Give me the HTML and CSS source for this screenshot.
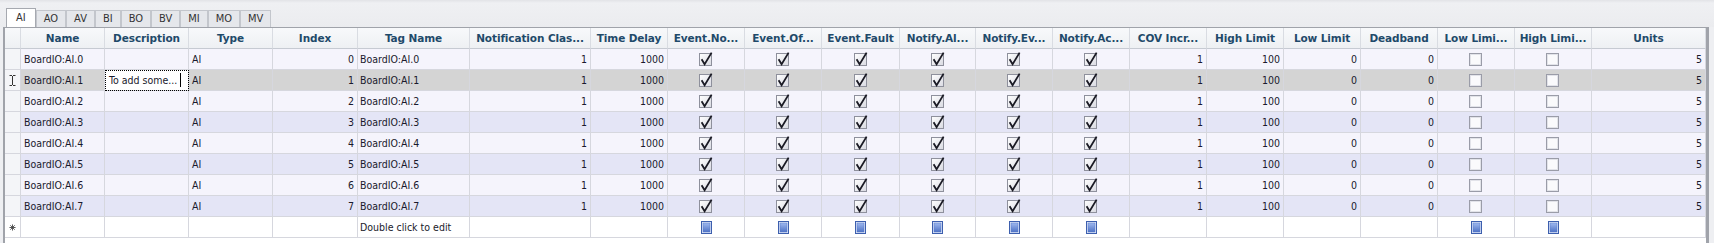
FILE: index.html
```html
<!DOCTYPE html>
<html>
<head>
<meta charset="utf-8">
<link rel="stylesheet" href="styles.css">
</head>
<body>
<div class="top">
  <div class="tab active">AI</div><div class="tab">AO</div><div class="tab">AV</div><div class="tab">BI</div><div class="tab">BO</div><div class="tab">BV</div><div class="tab">MI</div><div class="tab">MO</div><div class="tab">MV</div>
</div>
<div class="grid">
  <div class="row hdr">
    <div class="c ind"></div><div class="c">Name</div><div class="c">Description</div><div class="c">Type</div><div class="c">Index</div><div class="c">Tag Name</div><div class="c">Notification Clas...</div><div class="c">Time Delay</div><div class="c">Event.No...</div><div class="c">Event.Of...</div><div class="c">Event.Fault</div><div class="c">Notify.Al...</div><div class="c">Notify.Ev...</div><div class="c">Notify.Ac...</div><div class="c">COV Incr...</div><div class="c">High Limit</div><div class="c">Low Limit</div><div class="c">Deadband</div><div class="c">Low Limi...</div><div class="c">High Limi...</div><div class="c">Units</div>
  </div>

  <div class="row even">
    <div class="c ind"></div><div class="c">BoardIO:AI.0</div><div class="c"></div><div class="c">AI</div><div class="c r">0</div><div class="c tg">BoardIO:AI.0</div><div class="c r">1</div><div class="c r">1000</div>
    <div class="c ctr"><svg class="cb"><use href="#chk"/></svg></div><div class="c ctr"><svg class="cb"><use href="#chk"/></svg></div><div class="c ctr"><svg class="cb"><use href="#chk"/></svg></div><div class="c ctr"><svg class="cb"><use href="#chk"/></svg></div><div class="c ctr"><svg class="cb"><use href="#chk"/></svg></div><div class="c ctr"><svg class="cb"><use href="#chk"/></svg></div>
    <div class="c r">1</div><div class="c r">100</div><div class="c r">0</div><div class="c r">0</div><div class="c ctr"><svg class="cb"><use href="#unc"/></svg></div><div class="c ctr"><svg class="cb"><use href="#unc"/></svg></div><div class="c r">5</div>
  </div>

  <div class="row sel">
    <div class="c ind ctr"><svg class="ibeam" viewBox="0 0 7 11"><path d="M0.5 0.5h2.5M4 0.5h2.5M3.5 1v9M0.5 10.5h2.5M4 10.5h2.5" fill="none" stroke="#333" stroke-width="1"/></svg></div><div class="c">BoardIO:AI.1</div><div class="c edit">To add some...<span class="caret"></span></div><div class="c">AI</div><div class="c r">1</div><div class="c tg">BoardIO:AI.1</div><div class="c r">1</div><div class="c r">1000</div>
    <div class="c ctr"><svg class="cb"><use href="#chk"/></svg></div><div class="c ctr"><svg class="cb"><use href="#chk"/></svg></div><div class="c ctr"><svg class="cb"><use href="#chk"/></svg></div><div class="c ctr"><svg class="cb"><use href="#chk"/></svg></div><div class="c ctr"><svg class="cb"><use href="#chk"/></svg></div><div class="c ctr"><svg class="cb"><use href="#chk"/></svg></div>
    <div class="c r">1</div><div class="c r">100</div><div class="c r">0</div><div class="c r">0</div><div class="c ctr"><svg class="cb"><use href="#unc"/></svg></div><div class="c ctr"><svg class="cb"><use href="#unc"/></svg></div><div class="c r">5</div>
  </div>

  <div class="row even">
    <div class="c ind"></div><div class="c">BoardIO:AI.2</div><div class="c"></div><div class="c">AI</div><div class="c r">2</div><div class="c tg">BoardIO:AI.2</div><div class="c r">1</div><div class="c r">1000</div>
    <div class="c ctr"><svg class="cb"><use href="#chk"/></svg></div><div class="c ctr"><svg class="cb"><use href="#chk"/></svg></div><div class="c ctr"><svg class="cb"><use href="#chk"/></svg></div><div class="c ctr"><svg class="cb"><use href="#chk"/></svg></div><div class="c ctr"><svg class="cb"><use href="#chk"/></svg></div><div class="c ctr"><svg class="cb"><use href="#chk"/></svg></div>
    <div class="c r">1</div><div class="c r">100</div><div class="c r">0</div><div class="c r">0</div><div class="c ctr"><svg class="cb"><use href="#unc"/></svg></div><div class="c ctr"><svg class="cb"><use href="#unc"/></svg></div><div class="c r">5</div>
  </div>

  <div class="row odd">
    <div class="c ind"></div><div class="c">BoardIO:AI.3</div><div class="c"></div><div class="c">AI</div><div class="c r">3</div><div class="c tg">BoardIO:AI.3</div><div class="c r">1</div><div class="c r">1000</div>
    <div class="c ctr"><svg class="cb"><use href="#chk"/></svg></div><div class="c ctr"><svg class="cb"><use href="#chk"/></svg></div><div class="c ctr"><svg class="cb"><use href="#chk"/></svg></div><div class="c ctr"><svg class="cb"><use href="#chk"/></svg></div><div class="c ctr"><svg class="cb"><use href="#chk"/></svg></div><div class="c ctr"><svg class="cb"><use href="#chk"/></svg></div>
    <div class="c r">1</div><div class="c r">100</div><div class="c r">0</div><div class="c r">0</div><div class="c ctr"><svg class="cb"><use href="#unc"/></svg></div><div class="c ctr"><svg class="cb"><use href="#unc"/></svg></div><div class="c r">5</div>
  </div>

  <div class="row even">
    <div class="c ind"></div><div class="c">BoardIO:AI.4</div><div class="c"></div><div class="c">AI</div><div class="c r">4</div><div class="c tg">BoardIO:AI.4</div><div class="c r">1</div><div class="c r">1000</div>
    <div class="c ctr"><svg class="cb"><use href="#chk"/></svg></div><div class="c ctr"><svg class="cb"><use href="#chk"/></svg></div><div class="c ctr"><svg class="cb"><use href="#chk"/></svg></div><div class="c ctr"><svg class="cb"><use href="#chk"/></svg></div><div class="c ctr"><svg class="cb"><use href="#chk"/></svg></div><div class="c ctr"><svg class="cb"><use href="#chk"/></svg></div>
    <div class="c r">1</div><div class="c r">100</div><div class="c r">0</div><div class="c r">0</div><div class="c ctr"><svg class="cb"><use href="#unc"/></svg></div><div class="c ctr"><svg class="cb"><use href="#unc"/></svg></div><div class="c r">5</div>
  </div>

  <div class="row odd">
    <div class="c ind"></div><div class="c">BoardIO:AI.5</div><div class="c"></div><div class="c">AI</div><div class="c r">5</div><div class="c tg">BoardIO:AI.5</div><div class="c r">1</div><div class="c r">1000</div>
    <div class="c ctr"><svg class="cb"><use href="#chk"/></svg></div><div class="c ctr"><svg class="cb"><use href="#chk"/></svg></div><div class="c ctr"><svg class="cb"><use href="#chk"/></svg></div><div class="c ctr"><svg class="cb"><use href="#chk"/></svg></div><div class="c ctr"><svg class="cb"><use href="#chk"/></svg></div><div class="c ctr"><svg class="cb"><use href="#chk"/></svg></div>
    <div class="c r">1</div><div class="c r">100</div><div class="c r">0</div><div class="c r">0</div><div class="c ctr"><svg class="cb"><use href="#unc"/></svg></div><div class="c ctr"><svg class="cb"><use href="#unc"/></svg></div><div class="c r">5</div>
  </div>

  <div class="row even">
    <div class="c ind"></div><div class="c">BoardIO:AI.6</div><div class="c"></div><div class="c">AI</div><div class="c r">6</div><div class="c tg">BoardIO:AI.6</div><div class="c r">1</div><div class="c r">1000</div>
    <div class="c ctr"><svg class="cb"><use href="#chk"/></svg></div><div class="c ctr"><svg class="cb"><use href="#chk"/></svg></div><div class="c ctr"><svg class="cb"><use href="#chk"/></svg></div><div class="c ctr"><svg class="cb"><use href="#chk"/></svg></div><div class="c ctr"><svg class="cb"><use href="#chk"/></svg></div><div class="c ctr"><svg class="cb"><use href="#chk"/></svg></div>
    <div class="c r">1</div><div class="c r">100</div><div class="c r">0</div><div class="c r">0</div><div class="c ctr"><svg class="cb"><use href="#unc"/></svg></div><div class="c ctr"><svg class="cb"><use href="#unc"/></svg></div><div class="c r">5</div>
  </div>

  <div class="row odd">
    <div class="c ind"></div><div class="c">BoardIO:AI.7</div><div class="c"></div><div class="c">AI</div><div class="c r">7</div><div class="c tg">BoardIO:AI.7</div><div class="c r">1</div><div class="c r">1000</div>
    <div class="c ctr"><svg class="cb"><use href="#chk"/></svg></div><div class="c ctr"><svg class="cb"><use href="#chk"/></svg></div><div class="c ctr"><svg class="cb"><use href="#chk"/></svg></div><div class="c ctr"><svg class="cb"><use href="#chk"/></svg></div><div class="c ctr"><svg class="cb"><use href="#chk"/></svg></div><div class="c ctr"><svg class="cb"><use href="#chk"/></svg></div>
    <div class="c r">1</div><div class="c r">100</div><div class="c r">0</div><div class="c r">0</div><div class="c ctr"><svg class="cb"><use href="#unc"/></svg></div><div class="c ctr"><svg class="cb"><use href="#unc"/></svg></div><div class="c r">5</div>
  </div>

  <div class="row newrow">
    <div class="c ind ctr"><svg class="star" viewBox="0 0 8 8"><path d="M4 0.5v7M0.5 4h7M1.5 1.5l5 5M6.5 1.5l-5 5" fill="none" stroke="#444" stroke-width="1"/></svg></div><div class="c"></div><div class="c"></div><div class="c"></div><div class="c"></div><div class="c tg">Double click to edit</div><div class="c"></div><div class="c"></div>
    <div class="c ctr"><svg class="bb"><use href="#blu"/></svg></div><div class="c ctr"><svg class="bb"><use href="#blu"/></svg></div><div class="c ctr"><svg class="bb"><use href="#blu"/></svg></div><div class="c ctr"><svg class="bb"><use href="#blu"/></svg></div><div class="c ctr"><svg class="bb"><use href="#blu"/></svg></div><div class="c ctr"><svg class="bb"><use href="#blu"/></svg></div>
    <div class="c"></div><div class="c"></div><div class="c"></div><div class="c"></div><div class="c ctr"><svg class="bb"><use href="#blu"/></svg></div><div class="c ctr"><svg class="bb"><use href="#blu"/></svg></div><div class="c"></div>
  </div>
</div>

<svg class="defs" width="0" height="0">
  <defs>
    <linearGradient id="gchk" x1="0" y1="0" x2="1" y2="1">
      <stop offset="0" stop-color="#ffffff"/>
      <stop offset="1" stop-color="#d9dae2"/>
    </linearGradient>
    <linearGradient id="gblu" x1="0" y1="0" x2="0" y2="1">
      <stop offset="0" stop-color="#9fb8ee"/>
      <stop offset="1" stop-color="#4f73c6"/>
    </linearGradient>
    <symbol id="chk" viewBox="0 0 14 15" overflow="visible">
      <rect x="0.5" y="1.5" width="12" height="12" fill="url(#gchk)" stroke="#8e909c"/>
      <path d="M2.6 7.2 L5.6 12.2 L12.6 0.6" fill="none" stroke="#1a1a24" stroke-width="1.8" stroke-linejoin="miter"/>
    </symbol>
    <symbol id="unc" viewBox="0 0 14 15">
      <rect x="0.5" y="1.5" width="12" height="12" fill="#fafafc" stroke="#9a9ca8"/>
      <rect x="1.5" y="2.5" width="10" height="10" fill="none" stroke="#e2e3e9"/>
    </symbol>
    <symbol id="blu" viewBox="0 0 11 13">
      <rect x="0.5" y="0.5" width="10" height="12" fill="#dfe7f8" stroke="#3d5fae"/>
      <rect x="2" y="2" width="7" height="9" fill="url(#gblu)" stroke="#5579c9" stroke-width="0.5"/>
    </symbol>
  </defs>
</svg>
</body>
</html>
```

FILE: styles.css
```css
* { box-sizing: border-box; }
html, body { margin: 0; padding: 0; }
body {
  width: 1714px;
  height: 243px;
  overflow: hidden;
  background: #eeeff2;
  font-family: "DejaVu Sans Condensed", "DejaVu Sans", sans-serif;
  font-stretch: condensed;
  font-size: 10.5px;
  color: #1a1a2c;
}
.top {
  height: 27px;
  display: flex;
  align-items: flex-end;
  padding-left: 6px;
  background: linear-gradient(#e2e3e7 0, #eff0f3 3px, #ebecef 100%);
}
.tab {
  height: 17px;
  padding: 0 7px;
  border: 1px solid #c3c6cc;
  border-bottom: none;
  background: #e5e7eb;
  line-height: 16px;
  font-size: 11px;
  color: #333;
}
.tab.active {
  height: 19px;
  padding: 0 9px;
  line-height: 18px;
  background: #ffffff;
  border-color: #a6a9b0;
}
.grid {
  margin-left: 3px;
  width: 1706px;
  height: 216px;
  border-left: 2px solid #a0a3aa;
  border-top: 1px solid #a0a3aa;
  border-right: 3px solid #a0a3aa;
  background: #ffffff;
}
.row {
  display: grid;
  grid-template-columns: 16px 84px 84px 84px 85px 112px 121px 77px 77px 77px 78px 76px 77px 77px 77px 77px 77px 77px 77px 77px 114px;
  height: 21px;
}
.c {
  border-right: 1px solid #d6d7de;
  border-bottom: 1px solid #d6d7de;
  padding: 0 3px;
  line-height: 20px;
  white-space: nowrap;
  overflow: hidden;
}
.tg { padding-left: 2px; }
.r { text-align: right; }
.ctr {
  display: flex;
  align-items: center;
  justify-content: center;
  padding: 0;
}
.hdr .c {
  background: linear-gradient(#f8f9fb, #eef0f3);
  font-family: "DejaVu Sans", sans-serif;
  font-stretch: normal;
  font-weight: bold;
  font-size: 10.5px;
  letter-spacing: -0.1px;
  text-align: center;
  color: #1f4a6a;
  padding: 0;
  border-right-color: #d9dce2;
  border-bottom-color: #c6cad2;
}
.even .c { background: #f5f4fc; }
.odd .c { background: #e4e5f6; }
.sel .c { background: #d4d4d4; }
.newrow .c { background: #ffffff; }
.row .c.ind { background: #f4f5f8; }
.newrow .c.ind { background: #ffffff; }
.hdr .c.ind { background: linear-gradient(#f8f9fb, #eef0f3); }
.sel .c.edit {
  background: #ffffff;
  outline: 1px dotted #000;
  outline-offset: -1px;
  padding-left: 4px;
}
.caret {
  display: inline-block;
  width: 1px;
  height: 14px;
  background: #000;
  margin-left: 3px;
  vertical-align: -3px;
}
.cb { width: 14px; height: 15px; overflow: visible; }
.bb { width: 11px; height: 13px; }
.ibeam { width: 7px; height: 11px; }
.star { width: 7px; height: 7px; }
.defs { display: block; width: 0; height: 0; overflow: hidden; }
```
